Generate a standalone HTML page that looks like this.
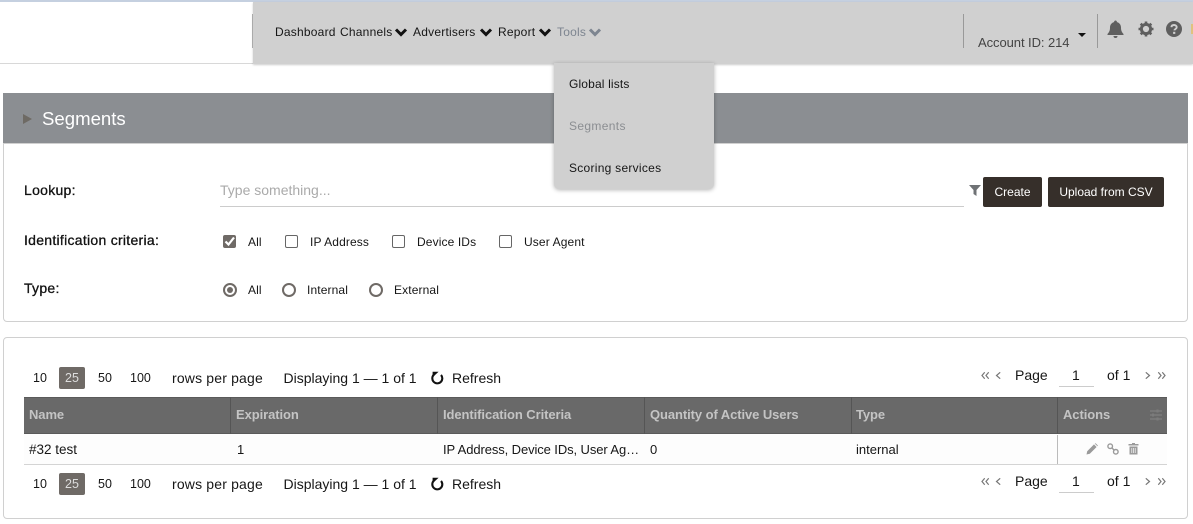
<!DOCTYPE html>
<html><head><meta charset="utf-8">
<style>
*{box-sizing:border-box;margin:0;padding:0}
html,body{width:1193px;height:524px;overflow:hidden;background:#fff;font-family:"Liberation Sans",sans-serif;color:#161616}
.a{position:absolute;white-space:nowrap}
.t{position:absolute;white-space:nowrap;line-height:16px}
.n{font-size:12px;letter-spacing:.22px}
.o{font-size:12px;letter-spacing:.12px}
.l{font-size:14px;letter-spacing:.28px;-webkit-text-stroke:.3px #111;color:#111}
.h{font-size:13px;font-weight:bold;color:#c4c4c4;letter-spacing:-.08px}
svg{position:absolute;display:block}
</style></head><body>
<div class="a" style="left:0;top:0;width:1193px;height:2px;background:#c5d0e0"></div>
<div class="a" style="left:0;top:2px;width:253px;height:61px;background:#fff"></div>
<div class="a" style="left:0;top:63px;width:253px;height:1px;background:#d8d8d8"></div>
<div class="a" style="left:253px;top:2px;width:940px;height:62px;background:#d0d0d0;box-shadow:0 1px 2px rgba(0,0,0,.2)"></div>
<div class="a" style="left:252px;top:14px;width:1px;height:34px;background:#aaa"></div>

<div class="t n" style="left:275px;top:24px">Dashboard</div>
<div class="t n" style="left:340px;top:24px">Channels</div>
<svg style="left:394px;top:27px" width="14" height="10" viewBox="0 0 14 10"><path d="M2 2.5L7 7.5L12 2.5" fill="none" stroke="#111" stroke-width="3"/></svg>
<div class="t n" style="left:413px;top:24px">Advertisers</div>
<svg style="left:479px;top:27px" width="14" height="10" viewBox="0 0 14 10"><path d="M2 2.5L7 7.5L12 2.5" fill="none" stroke="#111" stroke-width="3"/></svg>
<div class="t n" style="left:498px;top:24px">Report</div>
<svg style="left:538px;top:27px" width="14" height="10" viewBox="0 0 14 10"><path d="M2 2.5L7 7.5L12 2.5" fill="none" stroke="#111" stroke-width="3"/></svg>
<div class="t n" style="left:557px;top:24px;color:#7d8590">Tools</div>
<svg style="left:588px;top:27px" width="14" height="10" viewBox="0 0 14 10"><path d="M2 2.5L7 7.5L12 2.5" fill="none" stroke="#7d8590" stroke-width="3"/></svg>

<div class="a" style="left:963px;top:14px;width:1px;height:34px;background:#999"></div>
<div class="t" style="left:978px;top:35px;font-size:13px;color:#444;letter-spacing:-.07px">Account ID: 214</div>
<div class="a" style="left:1078px;top:33px;width:0;height:0;border-left:4.5px solid transparent;border-right:4.5px solid transparent;border-top:4.5px solid #111"></div>
<div class="a" style="left:1097px;top:14px;width:1px;height:34px;background:#999"></div>
<svg style="left:1107px;top:20px" width="17" height="18" viewBox="0 0 17 18"><path d="M8.5 0.5a1.4 1.4 0 0 1 1.4 1.6C12.6 2.7 14 5 14 7.5c0 3.5 1 4.8 2.5 6.5v1H.5v-1C2 12.3 3 11 3 7.5 3 5 4.4 2.7 7.1 2.1A1.4 1.4 0 0 1 8.5.5zM6.5 16h4a2 2 0 0 1-4 0z" fill="#5f5f5f"/></svg>
<svg style="left:1138px;top:21px" width="16" height="16" viewBox="0 0 16 16"><circle cx="8" cy="8" r="4.6" fill="none" stroke="#5f5f5f" stroke-width="3"/><path d="M8 0.5V3M8 13V15.5M.5 8H3M13 8H15.5M2.7 2.7L4.4 4.4M11.6 11.6L13.3 13.3M2.7 13.3L4.4 11.6M11.6 4.4L13.3 2.7" stroke="#5f5f5f" stroke-width="2.6"/></svg>
<svg style="left:1166px;top:21px" width="16" height="16" viewBox="0 0 16 16"><circle cx="8" cy="8" r="8" fill="#5f5f5f"/><path d="M5.4 6.2C5.5 4.7 6.6 4 8 4c1.5 0 2.7.8 2.7 2.2 0 1.8-2.2 1.8-2.2 3.2" fill="none" stroke="#d0d0d0" stroke-width="1.9"/><rect x="7.1" y="10.8" width="2.2" height="2.1" fill="#d0d0d0"/></svg>
<div class="a" style="left:1191px;top:24px;width:2px;height:10px;background:#e0c27e"></div>

<!-- Segments header -->
<div class="a" style="left:3px;top:93px;width:1185px;height:50px;background:#8b8e92"></div>
<div class="a" style="left:23px;top:114px;width:0;height:0;border-top:5px solid transparent;border-bottom:5px solid transparent;border-left:9px solid #6e6a64"></div>
<div class="t" style="left:42px;top:109px;font-size:18.6px;line-height:20px;color:#fff">Segments</div>

<!-- Filter panel -->
<div class="a" style="left:3px;top:143px;width:1185px;height:179px;border:1px solid #d0d0d0;border-radius:0 0 4px 4px;background:#fff"></div>
<div class="t l" style="left:24px;top:182px">Lookup:</div>
<div class="t" style="left:220px;top:182px;font-size:14px;color:#aaa">Type something...</div>
<div class="a" style="left:220px;top:206px;width:744px;height:1px;background:#ccc"></div>
<svg style="left:969px;top:185px" width="12" height="11" viewBox="0 0 12 11"><path d="M0 0H12L7.5 5V11L4.5 9V5Z" fill="#6f7275"/></svg>
<div class="a" style="left:983px;top:177px;width:59px;height:30px;background:#362f2a;border-radius:2px;color:#fff;font-size:12px;line-height:30px;text-align:center">Create</div>
<div class="a" style="left:1048px;top:177px;width:116px;height:30px;background:#362f2a;border-radius:2px;color:#fff;font-size:12px;line-height:30px;text-align:center">Upload from CSV</div>

<div class="t l" style="left:24px;top:232px">Identification criteria:</div>
<div class="a" style="left:223px;top:235px;width:13px;height:13px;background:#6f6a66;border-radius:2px"></div>
<svg style="left:223px;top:235px" width="13" height="13" viewBox="0 0 13 13"><path d="M2.5 6.5L5.5 9.5L11 2.5" fill="none" stroke="#fff" stroke-width="2.2"/></svg>
<div class="t o" style="left:248px;top:234px">All</div>
<div class="a" style="left:285px;top:235px;width:13px;height:13px;border:1px solid #666;border-radius:2px"></div>
<div class="t o" style="left:310px;top:234px">IP Address</div>
<div class="a" style="left:392px;top:235px;width:13px;height:13px;border:1px solid #666;border-radius:2px"></div>
<div class="t o" style="left:417px;top:234px">Device IDs</div>
<div class="a" style="left:499px;top:235px;width:13px;height:13px;border:1px solid #666;border-radius:2px"></div>
<div class="t o" style="left:524px;top:234px">User Agent</div>

<div class="t l" style="left:24px;top:280px">Type:</div>
<div class="a" style="left:223px;top:283px;width:14px;height:14px;border:2px solid #6f6a66;border-radius:50%"></div>
<div class="a" style="left:227px;top:287px;width:6px;height:6px;background:#6f6a66;border-radius:50%"></div>
<div class="t o" style="left:248px;top:282px">All</div>
<div class="a" style="left:282px;top:283px;width:14px;height:14px;border:2px solid #6f6a66;border-radius:50%"></div>
<div class="t o" style="left:307px;top:282px">Internal</div>
<div class="a" style="left:369px;top:283px;width:14px;height:14px;border:2px solid #6f6a66;border-radius:50%"></div>
<div class="t o" style="left:394px;top:282px">External</div>

<!-- Dropdown -->
<div class="a" style="left:554px;top:63px;width:160px;height:126px;background:#d0d0d0;border-radius:0 0 5px 5px;box-shadow:0 1px 4px rgba(0,0,0,.3)"></div>
<div class="t n" style="left:569px;top:76px;letter-spacing:.15px">Global lists</div>
<div class="t n" style="left:569px;top:118px;color:#8b8e92;letter-spacing:.35px">Segments</div>
<div class="t n" style="left:569px;top:160px;letter-spacing:.27px">Scoring services</div>

<!-- Table panel -->
<div class="a" style="left:3px;top:337px;width:1185px;height:182px;border:1px solid #d0d0d0;border-radius:4px;background:#fff"></div>

<div class="t" style="left:33px;top:370px;font-size:12.5px">10</div>
<div class="a" style="left:59px;top:367px;width:26px;height:22px;background:#6f6a66;border-radius:2px;color:#ddd;font-size:12.5px;line-height:22px;text-align:center">25</div>
<div class="t" style="left:98px;top:370px;font-size:12.5px">50</div>
<div class="t" style="left:130px;top:370px;font-size:12.5px">100</div>
<div class="t" style="left:172px;top:370px;font-size:14px;letter-spacing:.17px">rows per page</div>
<div class="t" style="left:283.5px;top:370px;font-size:14px">Displaying 1 — 1 of 1</div>
<svg style="left:431px;top:371px" width="13" height="14" viewBox="0 0 13 14"><path d="M10 4A5 5 0 1 1 2.8 3.8" fill="none" stroke="#111" stroke-width="2.1"/><path d="M1.6 .8H7.6L1.6 6.2Z" fill="#111"/></svg>
<div class="t" style="left:452px;top:370px;font-size:14px">Refresh</div>

<svg style="left:981px;top:371px" width="9" height="9" viewBox="0 0 9 9"><path d="M3.7 1.3L1 4.5L3.7 7.7M7.7 1.3L5 4.5L7.7 7.7" fill="none" stroke="#777" stroke-width="1.2"/></svg>
<svg style="left:995px;top:371px" width="7" height="9" viewBox="0 0 7 9"><path d="M5.2 1.3L1.5 4.5L5.2 7.7" fill="none" stroke="#777" stroke-width="1.2"/></svg>
<div class="t" style="left:1015px;top:367px;font-size:14px">Page</div>
<div class="t" style="left:1072px;top:367px;font-size:14px">1</div>
<div class="a" style="left:1059px;top:386px;width:35px;height:1px;background:#ccc"></div>
<div class="t" style="left:1107px;top:367px;font-size:14px">of 1</div>
<svg style="left:1144px;top:371px" width="7" height="9" viewBox="0 0 7 9"><path d="M1.8 1.3L5.5 4.5L1.8 7.7" fill="none" stroke="#777" stroke-width="1.2"/></svg>
<svg style="left:1157px;top:371px" width="9" height="9" viewBox="0 0 9 9"><path d="M1.3 1.3L4 4.5L1.3 7.7M5.3 1.3L8 4.5L5.3 7.7" fill="none" stroke="#777" stroke-width="1.2"/></svg>

<!-- Table head -->
<div class="a" style="left:24px;top:397px;width:1143px;height:37px;background:#696969;border-top:1px solid #5a5a5a;border-bottom:1px solid #5a5a5a"></div>
<div class="a" style="left:230px;top:397px;width:1px;height:37px;background:#555"></div>
<div class="a" style="left:437px;top:397px;width:1px;height:37px;background:#555"></div>
<div class="a" style="left:644px;top:397px;width:1px;height:37px;background:#555"></div>
<div class="a" style="left:851px;top:397px;width:1px;height:37px;background:#555"></div>
<div class="a" style="left:1057px;top:397px;width:1px;height:37px;background:#555"></div>
<div class="t h" style="left:29px;top:407px">Name</div>
<div class="t h" style="left:236px;top:407px">Expiration</div>
<div class="t h" style="left:443px;top:407px">Identification Criteria</div>
<div class="t h" style="left:650px;top:407px">Quantity of Active Users</div>
<div class="t h" style="left:856px;top:407px">Type</div>
<div class="t h" style="left:1063px;top:407px">Actions</div>
<svg style="left:1150px;top:409px" width="12" height="12" viewBox="0 0 12 12"><path d="M0 2H12M0 6H12M0 10H12" stroke="#7c7c7c" stroke-width="1.5"/><path d="M7.5 .5V3.5M3 4.5V7.5M7.5 8.5V11.5" stroke="#7c7c7c" stroke-width="2"/></svg>

<!-- Row -->
<div class="a" style="left:24px;top:434px;width:1143px;height:30px;background:#fdfdfd"></div>
<div class="a" style="left:24px;top:464px;width:1143px;height:1px;background:#d4d4d4"></div>
<div class="a" style="left:1057px;top:435px;width:1px;height:29px;background:#bbb"></div>
<div class="t" style="left:29px;top:442px;font-size:13.5px">#32 test</div>
<div class="t" style="left:237px;top:442px;font-size:13px">1</div>
<div class="t" style="left:443px;top:442px;font-size:13px;letter-spacing:-.1px">IP Address, Device IDs, User Ag…</div>
<div class="t" style="left:650px;top:442px;font-size:13px">0</div>
<div class="t" style="left:856px;top:442px;font-size:13px">internal</div>
<svg style="left:1086px;top:443px" width="12" height="12" viewBox="0 0 12 12"><path d="M0.5 11.5L1.2 8.2L8 1.4L10.6 4L3.8 10.8Z M8.8 .6L9.6 .2L11.8 2.4L11.4 3.2Z" fill="#9a9a9a"/></svg>
<svg style="left:1107px;top:443px" width="12" height="12" viewBox="0 0 12 12"><circle cx="3.2" cy="3.2" r="2.3" fill="none" stroke="#9a9a9a" stroke-width="1.4"/><circle cx="8.8" cy="8.8" r="2.3" fill="none" stroke="#9a9a9a" stroke-width="1.4"/><path d="M4.5 4.5L7.5 7.5" stroke="#9a9a9a" stroke-width="1.4"/></svg>
<svg style="left:1128px;top:443px" width="11" height="12" viewBox="0 0 11 12"><path d="M4 0H7V1H10.5V2.5H.5V1H4ZM1.5 3.5H9.5V11.5H1.5Z" fill="#9a9a9a"/><path d="M3.8 5V10M5.5 5V10M7.2 5V10" stroke="#fdfdfd" stroke-width=".7"/></svg>

<!-- bottom pager -->
<div class="t" style="left:33px;top:476px;font-size:12.5px">10</div>
<div class="a" style="left:59px;top:473px;width:26px;height:22px;background:#6f6a66;border-radius:2px;color:#ddd;font-size:12.5px;line-height:22px;text-align:center">25</div>
<div class="t" style="left:98px;top:476px;font-size:12.5px">50</div>
<div class="t" style="left:130px;top:476px;font-size:12.5px">100</div>
<div class="t" style="left:172px;top:476px;font-size:14px;letter-spacing:.17px">rows per page</div>
<div class="t" style="left:283.5px;top:476px;font-size:14px">Displaying 1 — 1 of 1</div>
<svg style="left:431px;top:477px" width="13" height="14" viewBox="0 0 13 14"><path d="M10 4A5 5 0 1 1 2.8 3.8" fill="none" stroke="#111" stroke-width="2.1"/><path d="M1.6 .8H7.6L1.6 6.2Z" fill="#111"/></svg>
<div class="t" style="left:452px;top:476px;font-size:14px">Refresh</div>

<svg style="left:981px;top:477px" width="9" height="9" viewBox="0 0 9 9"><path d="M3.7 1.3L1 4.5L3.7 7.7M7.7 1.3L5 4.5L7.7 7.7" fill="none" stroke="#777" stroke-width="1.2"/></svg>
<svg style="left:995px;top:477px" width="7" height="9" viewBox="0 0 7 9"><path d="M5.2 1.3L1.5 4.5L5.2 7.7" fill="none" stroke="#777" stroke-width="1.2"/></svg>
<div class="t" style="left:1015px;top:473px;font-size:14px">Page</div>
<div class="t" style="left:1072px;top:473px;font-size:14px">1</div>
<div class="a" style="left:1059px;top:492px;width:35px;height:1px;background:#ccc"></div>
<div class="t" style="left:1107px;top:473px;font-size:14px">of 1</div>
<svg style="left:1144px;top:477px" width="7" height="9" viewBox="0 0 7 9"><path d="M1.8 1.3L5.5 4.5L1.8 7.7" fill="none" stroke="#777" stroke-width="1.2"/></svg>
<svg style="left:1157px;top:477px" width="9" height="9" viewBox="0 0 9 9"><path d="M1.3 1.3L4 4.5L1.3 7.7M5.3 1.3L8 4.5L5.3 7.7" fill="none" stroke="#777" stroke-width="1.2"/></svg>
</body></html>
